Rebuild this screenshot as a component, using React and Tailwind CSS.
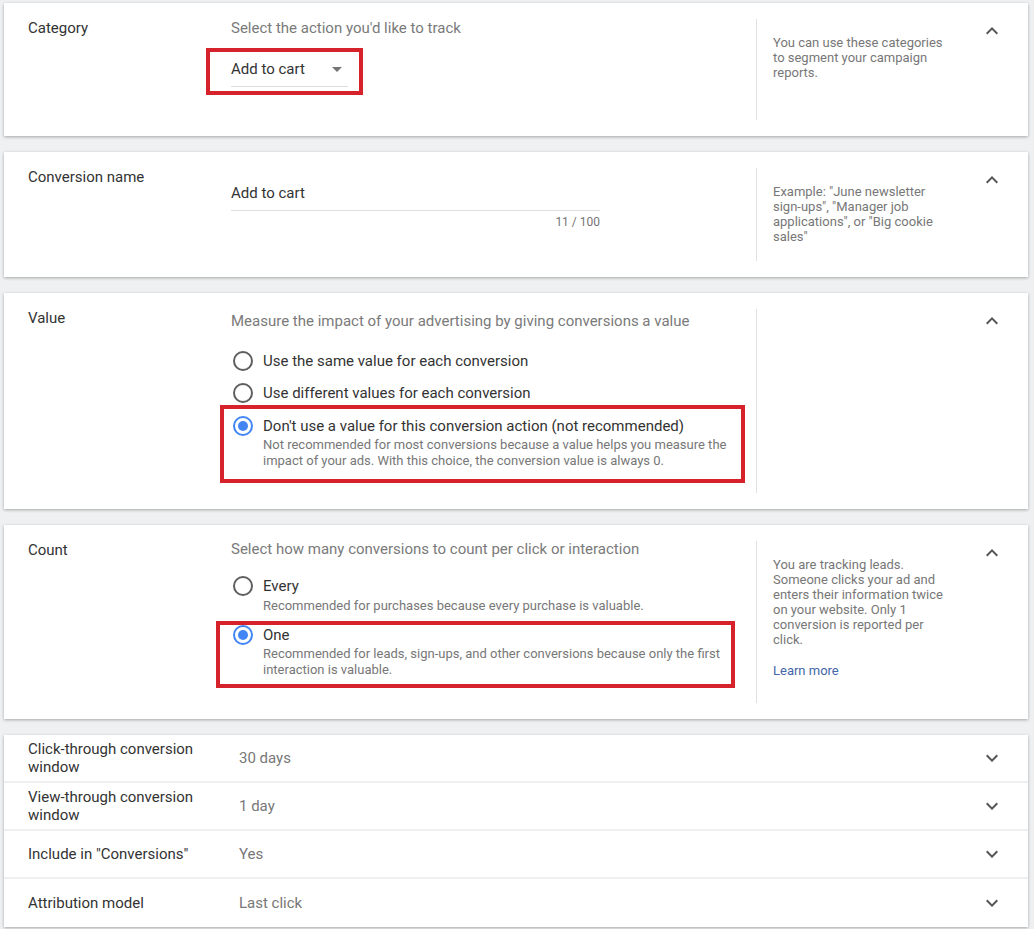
import React from 'react';

const ChevronUp = () => (
  <svg width="24" height="24" viewBox="0 0 24 24" className="shrink-0">
    <path d="M12 8l-6 6 1.41 1.41L12 10.83l4.59 4.58L18 14z" fill="#555" />
  </svg>
);

const ChevronDown = () => (
  <svg width="24" height="24" viewBox="0 0 24 24" className="shrink-0">
    <path d="M16.59 8.59L12 13.17 7.41 8.59 6 10l6 6 6-6z" fill="#555" />
  </svg>
);

const Radio = ({ checked }) => (
  <span
    className={`w-5 h-5 rounded-full border-2 flex items-center justify-center shrink-0 ${
      checked ? 'border-[#4285f4]' : 'border-[#5f5f5f]'
    }`}
  >
    {checked && <span className="w-[10px] h-[10px] rounded-full bg-[#4285f4]" />}
  </span>
);

// one expanded section: label | content | help | chevron
const Section = ({ label, rowClass, help, children }) => (
  <div className="bg-white shadow-[0_1px_3px_rgba(0,0,0,0.3)] py-4 px-6 flex">
    <div className="w-[203px] shrink-0 text-[15px] leading-[18px] text-[#333]">{label}</div>
    <div className={`w-[525px] shrink-0 ${rowClass}`}>{children}</div>
    <div className="w-[224px] shrink-0 border-l border-[#e0e0e0] pl-4 pt-4">
      <div className="w-[176px] text-[13px] leading-[15px] text-[#777]">{help}</div>
    </div>
    <ChevronUp />
  </div>
);

const Subtitle = ({ children, className = '' }) => (
  <div className={`text-[15px] leading-[18px] text-[#7a7a7a] ${className}`}>{children}</div>
);

const rows = [
  { label: 'Click-through conversion window', value: '30 days' },
  { label: 'View-through conversion window', value: '1 day' },
  { label: 'Include in "Conversions"', value: 'Yes' },
  { label: 'Attribution model', value: 'Last click' },
];

export default function App() {
  return (
    <div
      className="min-h-screen bg-[#eef0f1] pt-[3px] pl-1 pr-[6px] pb-[3px] flex flex-col gap-4"
      style={{ fontFamily: 'Roboto, "Liberation Sans", sans-serif' }}
    >
      {/* Category */}
      <Section
        label="Category"
        rowClass="h-[101px]"
        help="You can use these categories to segment your campaign reports."
      >
        <Subtitle>Select the action you'd like to track</Subtitle>
        <div className="mt-[11px] w-fit -ml-[25px] border-4 border-[#d6232b] pl-[21px] pr-[11px] pt-[7px] pb-[4px]">
          <div className="w-[117px] flex items-center justify-between pr-[6px] pb-[7px] border-b border-[#ddd]">
            <span className="text-[15px] leading-5 text-[#333]">Add to cart</span>
            <svg width="10" height="5" viewBox="0 0 10 5">
              <path d="M0 0l5 5 5-5z" fill="#757575" />
            </svg>
          </div>
        </div>
      </Section>

      {/* Conversion name */}
      <Section
        label="Conversion name"
        rowClass="h-[93px]"
        help={'Example: "June newsletter sign-ups", "Manager job applications", or "Big cookie sales"'}
      >
        <div className="mt-[15px] w-[369px]">
          <div className="text-[15px] leading-5 text-[#333] pb-[7px] border-b border-[#ddd]">Add to cart</div>
          <div className="mt-[3px] text-right text-[12px] leading-4 text-[#757575]">11 / 100</div>
        </div>
      </Section>

      {/* Value */}
      <Section label="Value" rowClass="h-[184px]" help="">
        <Subtitle className="mt-[3px]">Measure the impact of your advertising by giving conversions a value</Subtitle>
        <div className="mt-[15px]">
          <div className="h-8 flex items-center gap-[10px] pl-[2px]">
            <Radio />
            <span className="text-[15px] leading-5 text-[#333]">Use the same value for each conversion</span>
          </div>
          <div className="h-8 flex items-center gap-[10px] pl-[2px]">
            <Radio />
            <span className="text-[15px] leading-5 text-[#333]">Use different values for each conversion</span>
          </div>
          <div className="-mt-1 -ml-[11px] w-[525px] border-4 border-[#d6232b] pl-[9px] pr-2 pt-[7px] pb-[10px]">
            <div className="h-5 flex items-center gap-[10px]">
              <Radio checked />
              <span className="text-[15px] leading-5 text-[#333]">
                Don't use a value for this conversion action (not recommended)
              </span>
            </div>
            <div className="mt-[1px] pl-[30px] text-[13px] leading-4 text-[#777]">
              Not recommended for most conversions because a value helps you measure the impact of your ads. With
              this choice, the conversion value is always 0.
            </div>
          </div>
        </div>
      </Section>

      {/* Count */}
      <Section
        label="Count"
        rowClass="h-[162px]"
        help={
          <>
            <div>
              You are tracking leads. Someone clicks your ad and enters their information twice on your website. Only 1
              conversion is reported per click.
            </div>
            <div className="mt-4 text-[#4466aa]">Learn more</div>
          </>
        }
      >
        <Subtitle className="-mt-[1px]">Select how many conversions to count per click or interaction</Subtitle>
        <div className="mt-[18px] h-5 flex items-center gap-[10px] pl-[2px]">
          <Radio />
          <span className="text-[15px] leading-5 text-[#333]">Every</span>
        </div>
        <div className="mt-[2px] pl-8 text-[13px] leading-4 text-[#777]">
          Recommended for purchases because every purchase is valuable.
        </div>
        <div className="mt-[7px] -ml-[15px] w-[519px] border-4 border-[#d6232b] pl-[13px] pr-2 pt-0 pb-[6px]">
          <div className="h-5 flex items-center gap-[10px]">
            <Radio checked />
            <span className="text-[15px] leading-5 text-[#333]">One</span>
          </div>
          <div className="mt-[1px] pl-[30px] text-[13px] leading-4 text-[#777]">
            Recommended for leads, sign-ups, and other conversions because only the first interaction is valuable.
          </div>
        </div>
      </Section>

      {/* Collapsed settings */}
      <div className="bg-white shadow-[0_1px_3px_rgba(0,0,0,0.3)] flex flex-col divide-y-2 divide-[#eef0f1]">
        {rows.map((r) => (
          <div key={r.label} className="h-12 px-6 flex items-center">
            <div className="w-[211px] shrink-0">
              <div className="max-w-[172px] text-[15px] leading-[18px] text-[#333]">{r.label}</div>
            </div>
            <div className="flex-1 text-[15px] leading-5 text-[#777]">{r.value}</div>
            <ChevronDown />
          </div>
        ))}
      </div>
    </div>
  );
}
